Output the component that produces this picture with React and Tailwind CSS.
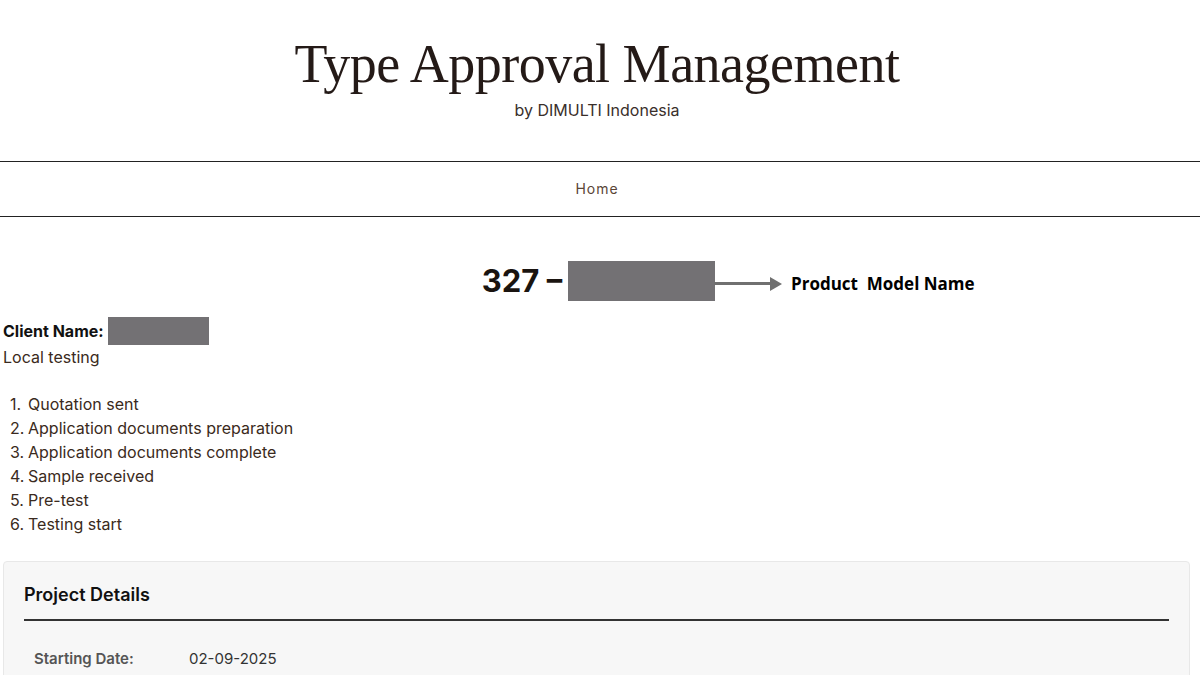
import React from "react";

const steps = [
  "Quotation sent",
  "Application documents preparation",
  "Application documents complete",
  "Sample received",
  "Pre-test",
  "Testing start",
];

const App = () => {
  return (
    <div className="min-h-screen bg-white text-[#2d221c]" style={{ fontFamily: "Inter, 'Noto Sans', sans-serif" }}>
      <header className="flex flex-col items-center pt-[34px] pb-[41px]">
        <h1
          className="-ml-[6px] text-[54px] leading-[60px] tracking-[-0.5px] text-[#241a17]"
          style={{ fontFamily: "'Liberation Serif', 'DejaVu Serif', serif" }}
        >
          Type Approval Management
        </h1>
        <p className="mt-[6px] -ml-[6px] text-[16px] leading-5 text-[#3a2f2b]">by DIMULTI Indonesia</p>
      </header>

      <nav className="flex h-[56px] items-center justify-center border-y border-[#222]">
        <a className="-ml-[6px] -mt-[2px] text-[14px] tracking-[1px] text-[#5a4536]">Home</a>
      </nav>

      <main className="px-[3px]">
        <div className="relative mt-[44px] flex items-center justify-center pr-[3px]">
          <div className="flex items-center gap-[6px]">
            <span className="text-[31px] font-bold leading-[40px] text-[#1a1410]">327 –</span>
            <span className="h-[40px] w-[147px] bg-[#737174]"></span>
          </div>
          <div className="absolute left-[711px] top-[10px] flex items-center">
            <div className="h-[3px] w-[56px] bg-[#707070]"></div>
            <svg width="12" height="14" viewBox="0 0 12 14">
              <polygon points="0,0 12,7 0,14" fill="#707070" />
            </svg>
            <span
              className="ml-[9px] text-[17px] font-bold text-black"
              style={{ fontFamily: "'Open Sans', 'Noto Sans', sans-serif" }}
            >
              Product&nbsp; Model Name
            </span>
          </div>
        </div>

        <div className="mt-[16px] flex items-center">
          <span className="text-[16px] font-bold text-[#111]">Client Name:</span>
          <span className="ml-[4px] h-[28px] w-[101px] bg-[#737174]"></span>
        </div>
        <p className="text-[16px] leading-[24px] text-[#3a2a20]">Local testing</p>

        <ol className="mt-[23px] pl-[7px] text-[16px] leading-[24px] text-[#3a2a20]">
          {steps.map((s, i) => (
            <li key={s} className="flex">
              <span className="inline-block w-[18px]">{i + 1}.</span>
              <span>{s}</span>
            </li>
          ))}
        </ol>

        <section className="mt-[25px] mr-[7px] rounded-[4px] border border-[#e8e8e8] bg-[#f7f7f7] px-[20px] pt-[20px] pb-[20px]">
          <h2 className="text-[18px] font-semibold leading-[26px] text-[#111]">Project Details</h2>
          <div className="mt-[11px] h-[2px] bg-[#333]"></div>
          <div className="mt-[27px] flex text-[15px] leading-[22px]">
            <span className="w-[165px] pl-[10px] font-semibold text-[#555]">Starting Date:</span>
            <span className="text-[#333]">02-09-2025</span>
          </div>
        </section>
      </main>
    </div>
  );
};

export default App;
